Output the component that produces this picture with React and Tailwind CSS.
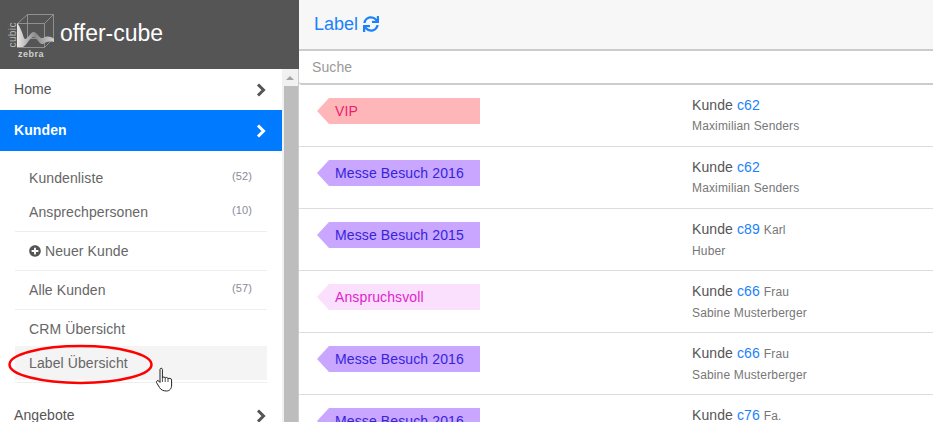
import { FaPlusCircle, FaSync } from 'react-icons/fa';

const labels = [
  { name: 'VIP', bg: 'bg-[#ffb6b9]', text: 'text-[#ee1c6e]', kunde: 'c62', extra: '', sub: 'Maximilian Senders' },
  { name: 'Messe Besuch 2016', bg: 'bg-[#c9a6ff]', text: 'text-[#3524dc]', kunde: 'c62', extra: '', sub: 'Maximilian Senders' },
  { name: 'Messe Besuch 2015', bg: 'bg-[#c9a6ff]', text: 'text-[#3524dc]', kunde: 'c89', extra: 'Karl', sub: 'Huber' },
  { name: 'Anspruchsvoll', bg: 'bg-[#fbe0fd]', text: 'text-[#e01fcc]', kunde: 'c66', extra: 'Frau', sub: 'Sabine Musterberger' },
  { name: 'Messe Besuch 2016', bg: 'bg-[#c9a6ff]', text: 'text-[#3524dc]', kunde: 'c66', extra: 'Frau', sub: 'Sabine Musterberger' },
  { name: 'Messe Besuch 2016', bg: 'bg-[#c9a6ff]', text: 'text-[#3524dc]', kunde: 'c76', extra: 'Fa.', sub: '' },
];

function Logo() {
  return (
    <svg width="58" height="69" viewBox="0 0 58 69" className="shrink-0">
      <defs>
        <linearGradient id="wave" x1="0" x2="1" y1="0" y2="0">
          <stop offset="0" stopColor="#e8e8e8" />
          <stop offset="0.5" stopColor="#8a8a8a" />
          <stop offset="1" stopColor="#d0d0d0" />
        </linearGradient>
      </defs>
      <g fill="none" stroke="#a0a0a0" strokeWidth="0.8">
        <path d="M17.5 23.5H44.5V47.5H17.5Z" />
        <path d="M27.5 14.5H53.5V38.5H27.5Z" />
        <path d="M17.5 23.5L27.5 14.5M44.5 23.5L53.5 14.5M44.5 47.5L53.5 38.5M17.5 47.5L27.5 38.5" />
      </g>
      <path d="M17 23C20 26 22 32 24 38C26 42 29 34 33 32C37 31 39 39 43 38C47 36 50 36 54 39L54 42C48 41 46 42 43 44C39 45 37 37 33 37C29 39 26 46 23 47L17 47Z" fill="url(#wave)" />
      <text transform="translate(15.5 47.5) rotate(-90)" fill="#b8b8b8" fontSize="10" fontFamily="'Liberation Sans', sans-serif" letterSpacing="0.4">cubic</text>
      <text x="18" y="57" fill="#cfcfcf" fontSize="9" fontWeight="700" fontFamily="'Liberation Sans', sans-serif" letterSpacing="0.5">zebra</text>
    </svg>
  );
}

function Chevron({ className }) {
  return (
    <svg width="10" height="14" viewBox="0 0 10 14" className={className}>
      <path d="M2 1.5L7.5 7L2 12.5" fill="none" stroke="currentColor" strokeWidth="3" />
    </svg>
  );
}

function NavItem({ label, active }) {
  return (
    <div className={`flex h-[41px] items-center justify-between pl-[14px] pr-[16px] text-[14px] tracking-[0.1px] ${active ? 'bg-[#007bff] font-bold text-white' : 'text-[#555]'}`}>
      <span>{label}</span>
      <Chevron className={active ? 'text-white' : 'text-[#555]'} />
    </div>
  );
}

function SubItem({ label, count, className = '' }) {
  return (
    <div className={`flex items-center justify-between pl-[14px] pr-[15px] text-[14px] tracking-[0.1px] text-[#666] ${className}`}>
      <span>{label}</span>
      {count && <span className="-mt-1 text-[11px] text-[#8a8a9a]">({count})</span>}
    </div>
  );
}

function Row({ item }) {
  return (
    <div className="flex h-[62px] shrink-0 border-b border-[#ddd] pl-[18px] pt-[13px]">
      <div
        className={`flex h-[26px] w-[163px] shrink-0 items-center pl-[18px] text-[14px] tracking-[0.12px] ${item.bg} ${item.text} [clip-path:polygon(12px_0,100%_0,100%_100%,12px_100%,0_50%)]`}
      >
        {item.name}
      </div>
      <div className="ml-[212px] -mt-[7px]">
        <div className="text-[14px] leading-[28px] tracking-[0.1px] text-[#555]">
          Kunde <span className="text-[#1a82fb]">{item.kunde}</span>
          {item.extra && <span className="ml-1 text-[12px] text-[#777]">{item.extra}</span>}
        </div>
        <div className="text-[12px] leading-[14px] tracking-[0.15px] text-[#777]">{item.sub}</div>
      </div>
    </div>
  );
}

export default function App() {
  return (
    <div className="relative flex h-[422px] w-[933px] overflow-hidden bg-white font-['Liberation_Sans',Arial,sans-serif]">
      {/* Sidebar */}
      <aside className="flex w-[299px] shrink-0 flex-col">
        <header className="flex h-[69px] shrink-0 items-center bg-[#555] text-[23px] text-white">
          <Logo />
          <span className="ml-[2px] -mt-[2px]">offer-cube</span>
        </header>
        <div className="flex min-h-0 flex-1 border-r border-[#ccc]">
          <nav className="w-[282px] shrink-0 overflow-hidden">
            <NavItem label="Home" />
            <NavItem label="Kunden" active />
            <div className="px-[15px] pt-[10px]">
              <SubItem label="Kundenliste" count="52" className="h-[34px]" />
              <SubItem label="Ansprechpersonen" count="10" className="h-[34px]" />
              <div className="mt-[2px] border-t border-[#eee]" />
              <div className="flex h-[38px] items-center gap-[4px] pl-[14px] text-[14px] tracking-[0.1px] text-[#666]">
                <FaPlusCircle size={12} className="text-[#555]" />
                Neuer Kunde
              </div>
              <div className="border-t border-[#eee]" />
              <SubItem label="Alle Kunden" count="57" className="h-[38px]" />
              <div className="border-t border-[#eee]" />
              <SubItem label="CRM Übersicht" className="h-[36px] pt-[2px]" />
              <SubItem label="Label Übersicht" className="h-[34px] bg-[#f4f4f4]" />
              <div className="mt-[2px] border-t border-[#eee]" />
            </div>
            <div className="mt-[12px]">
              <NavItem label="Angebote" />
            </div>
          </nav>
          {/* Scrollbar */}
          <div className="flex w-[16px] shrink-0 flex-col items-center bg-[#f1f1f1]">
            <div className="flex h-[17px] w-full items-center justify-center">
              <div className="h-0 w-0 border-x-[4px] border-b-[4px] border-x-transparent border-b-[#a3a3a3]" />
            </div>
            <div className="ml-[1px] w-[14px] flex-1 bg-[#bdbdbd]" />
          </div>
        </div>
      </aside>

      {/* Main */}
      <main className="flex min-w-0 flex-1 flex-col">
        <div className="flex h-[51px] shrink-0 items-center gap-[5px] border-b-2 border-[#ccc] bg-[#f7f7f7] pb-px pl-[15px] text-[18px] text-[#1a82fb]">
          <span>Label</span>
          <FaSync size={16} />
        </div>
        <div className="flex h-[34px] shrink-0 items-center rounded-l-[3px] border-b-2 border-[#ccc] pl-[13px] text-[14px] tracking-[0.1px] text-[#999]">Suche</div>
        <div className="flex min-h-0 flex-1 flex-col overflow-hidden">
          {labels.map((item, i) => (
            <Row key={i} item={item} />
          ))}
        </div>
      </main>

      {/* Annotation over the sidebar */}
      <svg width="170" height="50" viewBox="0 0 170 50" className="pointer-events-none absolute left-0 top-[340px]">
        <ellipse cx="80.5" cy="24.5" rx="71" ry="18.5" fill="none" stroke="#f00" strokeWidth="2.5" />
      </svg>
      <svg width="20" height="26" viewBox="0 0 20 26" className="pointer-events-none absolute left-[155px] top-[367px]">
        <path d="M5 2.5C5 .8 7.4 .8 7.4 2.5V11C8 9.6 10 9.6 10.2 11.2C10.8 10 12.8 10.2 13 11.8C13.8 10.8 16.6 11.2 16.6 13V18C16.6 21.5 14.8 24 11.5 24C8.5 24 6 23 4.5 20.5L1.5 15.5C.8 14 2.8 12.8 4 14.2L5 15.5Z" fill="#fff" stroke="#222" strokeWidth="1" />
        <path d="M7.4 11V15M10.2 11.2V15M13 11.8V15" fill="none" stroke="#222" strokeWidth="0.8" />
      </svg>
    </div>
  );
}
